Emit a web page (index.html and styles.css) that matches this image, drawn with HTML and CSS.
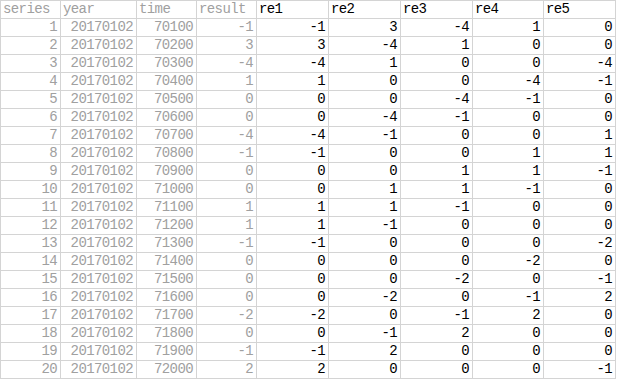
FILE: index.html
```html
<!DOCTYPE html>
<html>
<head>
<meta charset="utf-8">
<link rel="stylesheet" href="styles.css">
</head>
<body>
<div class="sheet">
<div class="c h">series</div><div class="c h">year</div><div class="c h">time</div><div class="c h">result</div><div class="c hb">re1</div><div class="c hb">re2</div><div class="c hb">re3</div><div class="c hb">re4</div><div class="c hb">re5</div>
<div class="c g">1</div><div class="c g">20170102</div><div class="c g">70100</div><div class="c g">-1</div><div class="c n">-1</div><div class="c n">3</div><div class="c n">-4</div><div class="c n">1</div><div class="c n">0</div>
<div class="c g">2</div><div class="c g">20170102</div><div class="c g">70200</div><div class="c g">3</div><div class="c n">3</div><div class="c n">-4</div><div class="c n">1</div><div class="c n">0</div><div class="c n">0</div>
<div class="c g">3</div><div class="c g">20170102</div><div class="c g">70300</div><div class="c g">-4</div><div class="c n">-4</div><div class="c n">1</div><div class="c n">0</div><div class="c n">0</div><div class="c n">-4</div>
<div class="c g">4</div><div class="c g">20170102</div><div class="c g">70400</div><div class="c g">1</div><div class="c n">1</div><div class="c n">0</div><div class="c n">0</div><div class="c n">-4</div><div class="c n">-1</div>
<div class="c g">5</div><div class="c g">20170102</div><div class="c g">70500</div><div class="c g">0</div><div class="c n">0</div><div class="c n">0</div><div class="c n">-4</div><div class="c n">-1</div><div class="c n">0</div>
<div class="c g">6</div><div class="c g">20170102</div><div class="c g">70600</div><div class="c g">0</div><div class="c n">0</div><div class="c n">-4</div><div class="c n">-1</div><div class="c n">0</div><div class="c n">0</div>
<div class="c g">7</div><div class="c g">20170102</div><div class="c g">70700</div><div class="c g">-4</div><div class="c n">-4</div><div class="c n">-1</div><div class="c n">0</div><div class="c n">0</div><div class="c n">1</div>
<div class="c g">8</div><div class="c g">20170102</div><div class="c g">70800</div><div class="c g">-1</div><div class="c n">-1</div><div class="c n">0</div><div class="c n">0</div><div class="c n">1</div><div class="c n">1</div>
<div class="c g">9</div><div class="c g">20170102</div><div class="c g">70900</div><div class="c g">0</div><div class="c n">0</div><div class="c n">0</div><div class="c n">1</div><div class="c n">1</div><div class="c n">-1</div>
<div class="c g">10</div><div class="c g">20170102</div><div class="c g">71000</div><div class="c g">0</div><div class="c n">0</div><div class="c n">1</div><div class="c n">1</div><div class="c n">-1</div><div class="c n">0</div>
<div class="c g">11</div><div class="c g">20170102</div><div class="c g">71100</div><div class="c g">1</div><div class="c n">1</div><div class="c n">1</div><div class="c n">-1</div><div class="c n">0</div><div class="c n">0</div>
<div class="c g">12</div><div class="c g">20170102</div><div class="c g">71200</div><div class="c g">1</div><div class="c n">1</div><div class="c n">-1</div><div class="c n">0</div><div class="c n">0</div><div class="c n">0</div>
<div class="c g">13</div><div class="c g">20170102</div><div class="c g">71300</div><div class="c g">-1</div><div class="c n">-1</div><div class="c n">0</div><div class="c n">0</div><div class="c n">0</div><div class="c n">-2</div>
<div class="c g">14</div><div class="c g">20170102</div><div class="c g">71400</div><div class="c g">0</div><div class="c n">0</div><div class="c n">0</div><div class="c n">0</div><div class="c n">-2</div><div class="c n">0</div>
<div class="c g">15</div><div class="c g">20170102</div><div class="c g">71500</div><div class="c g">0</div><div class="c n">0</div><div class="c n">0</div><div class="c n">-2</div><div class="c n">0</div><div class="c n">-1</div>
<div class="c g">16</div><div class="c g">20170102</div><div class="c g">71600</div><div class="c g">0</div><div class="c n">0</div><div class="c n">-2</div><div class="c n">0</div><div class="c n">-1</div><div class="c n">2</div>
<div class="c g">17</div><div class="c g">20170102</div><div class="c g">71700</div><div class="c g">-2</div><div class="c n">-2</div><div class="c n">0</div><div class="c n">-1</div><div class="c n">2</div><div class="c n">0</div>
<div class="c g">18</div><div class="c g">20170102</div><div class="c g">71800</div><div class="c g">0</div><div class="c n">0</div><div class="c n">-1</div><div class="c n">2</div><div class="c n">0</div><div class="c n">0</div>
<div class="c g">19</div><div class="c g">20170102</div><div class="c g">71900</div><div class="c g">-1</div><div class="c n">-1</div><div class="c n">2</div><div class="c n">0</div><div class="c n">0</div><div class="c n">0</div>
<div class="c g">20</div><div class="c g">20170102</div><div class="c g">72000</div><div class="c g">2</div><div class="c n">2</div><div class="c n">0</div><div class="c n">0</div><div class="c n">0</div><div class="c n">-1</div>
</div>
</body>
</html>
```
FILE: styles.css
```css
html, body {
  margin: 0;
  padding: 0;
  background: #ffffff;
}
.sheet {
  display: grid;
  grid-template-columns: 59px 75px 59px 59px 71px 71px 71px 70px 71px;
  grid-auto-rows: 17px;
  gap: 1px;
  padding: 1px;
  width: max-content;
  background: #d4d4d4;
  font-family: "Liberation Mono", "DejaVu Sans Mono", monospace;
  font-size: 14px;
  letter-spacing: -0.6px;
}
.c {
  background: #ffffff;
  line-height: 17px;
  white-space: nowrap;
  overflow: hidden;
}
.h {
  color: #a0a0a0;
  padding-left: 2px;
}
.hb {
  color: #000000;
  padding-left: 2px;
}
.g {
  color: #a0a0a0;
  text-align: right;
  padding-right: 3px;
}
.n {
  color: #000000;
  text-align: right;
  padding-right: 3px;
}
```
